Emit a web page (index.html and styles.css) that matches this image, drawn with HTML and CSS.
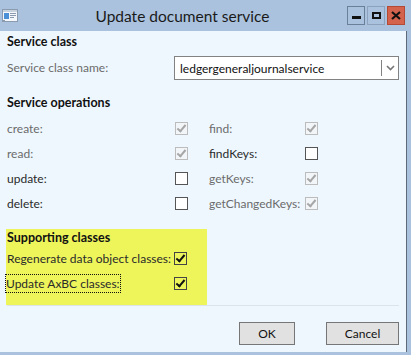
FILE: index.html
```html
<!DOCTYPE html>
<html>
<head>
<meta charset="utf-8">
<link rel="stylesheet" href="styles.css">
</head>
<body>
<div class="window">
  <div class="titlebar">
    <svg class="appicon" width="16" height="14" viewBox="0 0 16 14">
      <rect x="0.5" y="0.5" width="15" height="12" fill="#f4f7fb" stroke="#8a9bb0"/>
      <rect x="1" y="1" width="14" height="2" fill="#c9d3de"/>
      <rect x="2" y="4" width="5" height="6" fill="#4b8fd6"/>
      <rect x="8" y="4" width="6" height="1" fill="#8a9bb0"/>
      <rect x="8" y="6" width="6" height="1" fill="#8a9bb0"/>
      <rect x="8" y="8" width="4" height="1" fill="#8a9bb0"/>
      <rect x="1" y="11" width="2" height="1" fill="#8a9bb0"/>
    </svg>
    <div class="title">Update document service</div>
    <div class="ctrls">
      <div class="cbtn min"><span class="minbar"></span></div>
      <div class="cbtn max"><span class="maxbox"></span></div>
      <div class="cbtn close">
        <svg width="10" height="9" viewBox="0 0 10 9"><path d="M1 1 L9 8 M9 1 L1 8" stroke="#111" stroke-width="2.2"/></svg>
      </div>
    </div>
  </div>
  <div class="body">
    <div class="heading h1">Service class</div>
    <div class="namerow">
      <span class="label gray">Service class name:</span>
      <div class="combo">
        <span class="combotext">ledgergeneraljournalservice</span>
        <span class="combobtn">
          <svg width="9" height="6" viewBox="0 0 9 6"><path d="M1 1 L4.5 4.5 L8 1" fill="none" stroke="#777" stroke-width="1.6"/></svg>
        </span>
      </div>
    </div>
    <div class="heading h2">Service operations</div>
    <div class="ops">
      <div class="col left">
        <div class="op"><span class="label gray">create:</span><span class="cb dis chk"></span></div>
        <div class="op"><span class="label gray">read:</span><span class="cb dis chk"></span></div>
        <div class="op"><span class="label">update:</span><span class="cb"></span></div>
        <div class="op"><span class="label">delete:</span><span class="cb"></span></div>
      </div>
      <div class="col right">
        <div class="op"><span class="label gray">find:</span><span class="cb dis chk"></span></div>
        <div class="op"><span class="label">findKeys:</span><span class="cb"></span></div>
        <div class="op"><span class="label gray">getKeys:</span><span class="cb dis chk"></span></div>
        <div class="op"><span class="label gray">getChangedKeys:</span><span class="cb dis chk"></span></div>
      </div>
    </div>
    <div class="support">
      <div class="heading h3">Supporting classes</div>
      <div class="op"><span class="label">Regenerate data object classes:</span><span class="cb on chk"></span></div>
      <div class="op"><span class="label focus">Update AxBC classes:</span><span class="cb on chk"></span></div>
    </div>
    <div class="sep"></div>
    <div class="buttons">
      <button class="btn ok">OK</button>
      <button class="btn cancel">Cancel</button>
    </div>
  </div>
</div>
</body>
</html>
```

FILE: styles.css
```css
html, body {
  margin: 0;
  padding: 0;
}
body {
  width: 411px;
  height: 355px;
  overflow: hidden;
  font-family: Lato, "Liberation Sans", sans-serif;
  font-size: 12px;
}
.window {
  width: 411px;
  height: 355px;
  background: #aac2de;
  display: flex;
  flex-direction: column;
}
.titlebar {
  height: 31px;
  display: flex;
  align-items: center;
}
.appicon {
  margin-left: 2px;
  margin-top: 1px;
  flex: none;
}
.title {
  flex: 1;
  text-align: center;
  font-size: 15.5px;
  color: #1a1a1a;
  line-height: 18px;
  margin-top: 1px;
}
.ctrls {
  margin-right: 6px;
  display: flex;
  gap: 2px;
  margin-top: -1px;
}
.cbtn {
  width: 16px;
  height: 17px;
  border: 1px solid #6a7f98;
  display: flex;
  align-items: center;
  justify-content: center;
  box-sizing: content-box;
}
.cbtn.max { border-color: #8da3bd; }
.cbtn.close {
  background: #d4634d;
  border-color: #b44a36;
}
.minbar {
  width: 9px;
  height: 3px;
  background: #111;
  margin-top: 4px;
}
.maxbox {
  width: 5px;
  height: 3px;
  border: 2px solid #111;
}
.body {
  flex: 1;
  background: #eef7fe;
  margin-right: 4px;
  margin-bottom: 3px;
  border-right: 1px solid #5d6a7a;
  padding-left: 7px;
  display: flex;
  flex-direction: column;
}
.heading {
  font-weight: bold;
  font-size: 12.5px;
  color: #111;
  line-height: 16px;
  height: 16px;
}
.h1 { margin-top: 3px; }
.namerow {
  margin-top: 6px;
  height: 24px;
  display: flex;
  align-items: center;
}
.label {
  color: #2a2a2a;
  line-height: 16px;
  white-space: nowrap;
}
.label.gray { color: #6b6b6b; }
.namerow .label { width: 167px; }
.combo {
  width: 223px;
  height: 22px;
  border: 1px solid #828282;
  background: #fff;
  display: flex;
  align-items: center;
}
.combotext {
  flex: 1;
  padding-left: 5px;
  color: #111;
}
.combobtn {
  width: 16px;
  height: 16px;
  border-left: 1px solid #828282;
  display: flex;
  align-items: center;
  justify-content: center;
}
.h2 { margin-top: 15px; }
.ops {
  margin-top: 5px;
  display: flex;
}
.col { display: flex; flex-direction: column; }
.col.left { width: 202px; }
.col.left .label { width: 168px; }
.col.right .label { width: 96px; }
.op {
  height: 25px;
  display: flex;
  align-items: center;
}
.cb {
  width: 11px;
  height: 11px;
  border: 1px solid #555;
  background: #fff;
  position: relative;
  flex: none;
}
.cb.dis {
  border-color: #bcbcbc;
  background: #f3f6f9;
}
.cb.chk::after {
  content: "";
  position: absolute;
  left: 3px;
  top: 0px;
  width: 3px;
  height: 7px;
  border: solid #a6a6a6;
  border-width: 0 2px 2px 0;
  transform: rotate(40deg);
}
.cb.on {
  background: #eef55b;
  border-color: #444;
}
.cb.on::after {
  border-color: #111;
  border-width: 0 2.5px 2.5px 0;
}
.support {
  margin-top: 13px;
  margin-left: -1px;
  width: 200px;
  padding-left: 1px;
  height: 76px;
  background: #eef55b;
}
.h3 { margin-top: 1px; }
.support .op:first-of-type { margin-top: 3px; }
.support .label { width: 168px; }
.support .label.focus {
  width: auto;
  margin-left: -1px;
  margin-right: auto;
  outline: 1px dotted #111;
  outline-offset: 0;
  line-height: 17px;
}
.support .op .cb { margin-right: 20px; }
.sep {
  height: 1px;
  background: #dde3ea;
  margin-right: 7px;
  margin-left: 0;
}
.buttons {
  margin-top: 16px;
  display: flex;
  justify-content: flex-end;
  margin-right: 7px;
  gap: 31px;
}
.btn {
  font-family: inherit;
  font-size: 12px;
  height: 23px;
  background: #e1e1e1;
  border: 1px solid #767676;
  color: #111;
  padding: 0;
  margin: 0;
}
.btn.ok { width: 56px; }
.btn.cancel { width: 73px; }
```
